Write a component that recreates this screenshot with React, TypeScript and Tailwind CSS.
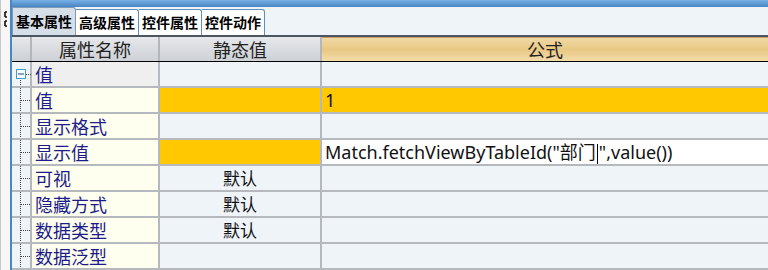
import React from 'react';

type Row = { name: string; stat?: string; formula?: string; orange?: boolean; group?: boolean; editing?: boolean };

const rows: Row[] = [
  { name: '值', group: true },
  { name: '值', orange: true, formula: '1' },
  { name: '显示格式' },
  { name: '显示值', orange: true, editing: true },
  { name: '可视', stat: '默认' },
  { name: '隐藏方式', stat: '默认' },
  { name: '数据类型', stat: '默认' },
  { name: '数据泛型' },
];

const tabs = ['基本属性', '高级属性', '控件属性', '控件动作'];

const cjk = { fontFamily: '"Noto Sans CJK SC", "Noto Sans", sans-serif' };
const latin = { fontFamily: '"Noto Sans", "Noto Sans CJK SC", sans-serif' };

const TreeCell = ({ first, group }: { first: boolean; group?: boolean }) => (
  <div className="relative w-[20px] shrink-0 bg-[#eff4f9] border-r-2 border-[#b5b8bc]">
    <svg width="20" height="24" className="absolute left-0 top-0">
      <line x1="8.5" y1={first ? 12 : 0} x2="8.5" y2="26" stroke="#444" strokeDasharray="1 1" />
      {group ? (
        <>
          <rect x="4.5" y="7.5" width="9" height="9" fill="#fff" stroke="#3aa3c9" />
          <line x1="6" y1="12" x2="12" y2="12" stroke="#1b3f8f" />
          <line x1="14" y1="12.5" x2="19" y2="12.5" stroke="#444" strokeDasharray="1 1" />
        </>
      ) : (
        <line x1="9" y1="12.5" x2="19" y2="12.5" stroke="#444" strokeDasharray="1 1" />
      )}
    </svg>
  </div>
);

export default function App() {
  return (
    <div className="w-[768px] h-[270px] overflow-hidden flex bg-[#eff4f9]" style={cjk}>
      <div className="w-[12px] shrink-0 flex bg-[#f6f6f6]">
        <div className="w-[10px] relative border-l border-[#c8c8c8]">
          <svg width="10" height="20" className="absolute left-[1px] top-[11px]">
            <path d="M3 1h2M3 1v5M3 6h2M3 10h2M3 10v5M3 15h2" stroke="#111" strokeWidth="1.6" fill="none" />
          </svg>
        </div>
        <div className="w-[2px] bg-[#4a86c3]" />
      </div>
      <div className="flex-1 flex flex-col min-w-0">
        <div className="h-[7px] shrink-0 bg-gradient-to-b from-[#79b0e4] via-[#5f9ad4] to-[#4b86c2]" />
        <div className="h-[28px] shrink-0 flex items-end pl-[0px] bg-[#eff4f9]">
          {tabs.map((t, i) => (
            <div
              key={t}
              className={
                i === 0
                  ? 'h-[28px] w-[64px] flex items-center justify-center border border-b-0 border-[#7a9ab8] rounded-tr-[3px] bg-[#d6dfe8] text-[14px] font-bold text-black'
                  : 'h-[26px] w-[63px] flex items-center justify-center border border-b-0 border-l-0 border-[#5c8fbd] rounded-tr-[3px] bg-white text-[14px] font-bold text-black'
              }
            >
              {t}
            </div>
          ))}
        </div>
        <div className="h-[2px] shrink-0 bg-[#4d5660]" />
        <div className="h-[25px] shrink-0 flex border-b border-black">
          <div className="w-[20px] shrink-0 bg-gradient-to-b from-[#e6e8eb] to-[#cdd0d5] border-r-2 border-[#b3b6ba]" />
          <div className="w-[128px] shrink-0 flex items-center justify-center text-[18px] text-[#222] bg-gradient-to-b from-[#e6e8eb] to-[#cdd0d5] border-r-2 border-[#b3b6ba]">
            属性名称
          </div>
          <div className="w-[162px] shrink-0 flex items-center justify-center text-[18px] text-[#222] bg-gradient-to-b from-[#e6e8eb] to-[#cdd0d5] border-r-2 border-[#b3b6ba]">
            静态值
          </div>
          <div className="flex-1 flex items-center justify-center text-[18px] text-[#222] bg-gradient-to-b from-[#f1d9a6] via-[#e8c884] to-[#f3dcaa] border-t border-[#c99a6c]">
            公式
          </div>
        </div>
        {rows.map((r, i) => (
          <div key={i} className="h-[26px] shrink-0 flex border-b-2 border-[#b5b8bc]">
            <TreeCell first={i === 0} group={r.group} />
            <div
              className={
                (r.group ? 'bg-[#efefef] ' : 'bg-[#fffff0] ') +
                'w-[128px] shrink-0 flex items-center pl-[3px] text-[18px] text-[#1c1c8a] border-r-2 border-[#b5b8bc]'
              }
            >
              {r.name}
            </div>
            <div
              className={
                (r.orange ? 'bg-[#ffc800] ' : 'bg-[#eff4f9] ') +
                'w-[162px] shrink-0 flex items-center justify-center text-[17px] text-[#111] border-r-2 border-[#b5b8bc]'
              }
            >
              {r.stat}
            </div>
            <div
              className={
                (r.orange && !r.editing ? 'bg-[#ffc800] ' : r.editing ? 'bg-white ' : 'bg-[#eff4f9] ') +
                'flex-1 flex items-center pl-[3px] text-[18px] text-[#111]'
              }
              style={latin}
            >
              {r.editing ? (
                <span className="whitespace-nowrap">
                  Match.fetchViewByTableId("部门<span className="inline-block w-[1px] h-[20px] bg-black align-middle mx-[1px]" />",value())
                </span>
              ) : (
                r.formula
              )}
            </div>
          </div>
        ))}
      </div>
    </div>
  );
}
